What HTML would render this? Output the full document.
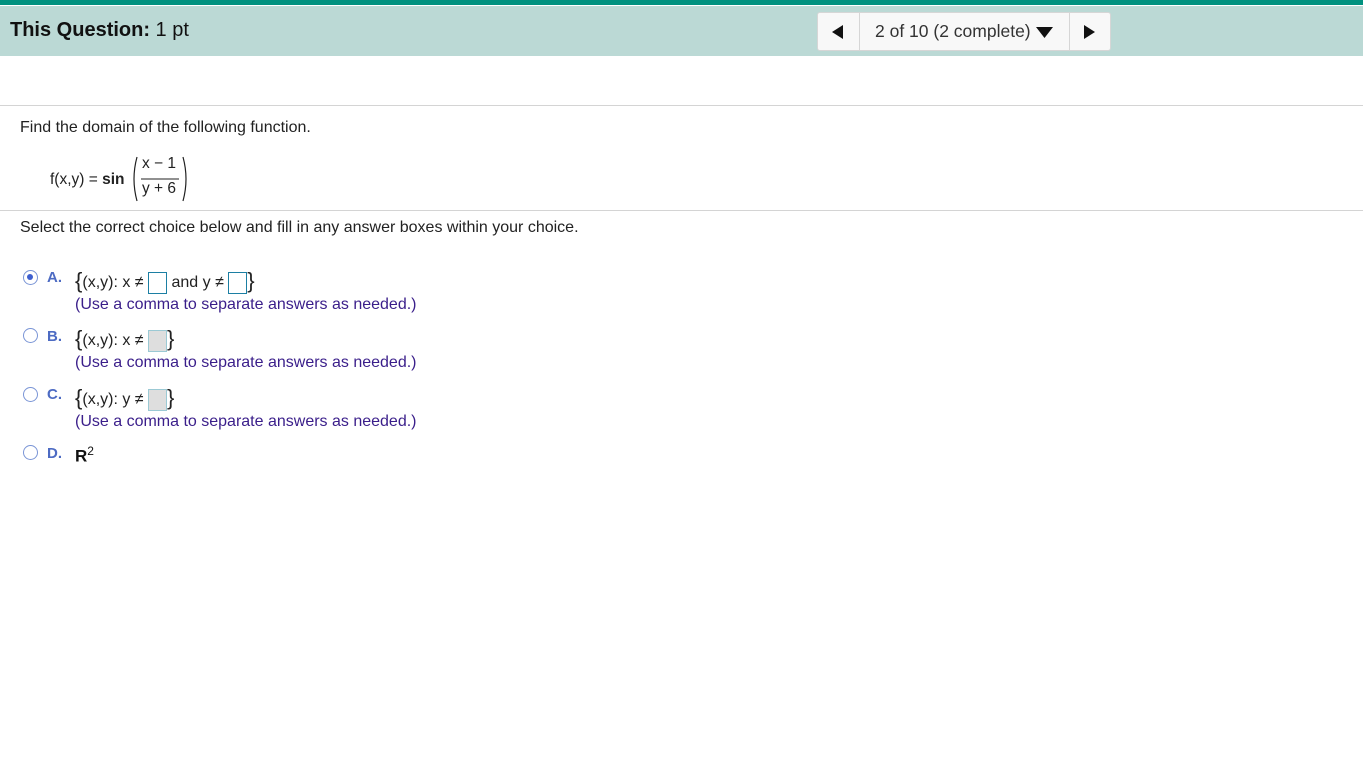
<!DOCTYPE html>
<html><head><style>
body{margin:0;width:1363px;height:767px;overflow:hidden;background:#fff;font-family:"Liberation Sans",Arial,sans-serif;color:#222;position:relative}
.top{position:absolute;left:0;top:0;width:1363px;height:5px;background:#00917f}
.hdr{position:absolute;left:0;top:6px;width:1363px;height:50px;background:#bbd9d5}
.hdr .t{position:absolute;left:10px;top:13px;font-size:20px;color:#111}
.nav{position:absolute;left:817px;top:12px;width:292px;height:37px;background:#f8f8f8;border:1px solid #d6d6d6;border-radius:3px}
.nav .d{position:absolute;top:0;width:1px;height:37px;background:#d6d6d6}
.hr{position:absolute;left:0;width:1363px;height:1px;background:#d4d4d4}
.txt{position:absolute;font-size:16px;white-space:nowrap}
.u{color:#3a1e8a}
.lbl{position:absolute;font-size:15px;font-weight:bold;color:#4d6bc3}
.rad{position:absolute;width:15px;height:15px;border:1.5px solid #7a95d6;border-radius:50%;box-sizing:border-box;background:#fff}
.box{display:inline-block;width:19px;height:22px;box-sizing:border-box;border:1.5px solid #1c7fa3;vertical-align:middle;background:#fff}
.box.g{background:#dedede;border-color:#9bc9d4}
.br{font-size:22px;vertical-align:middle;position:relative;top:-2px}
</style></head><body>
<div class="top"></div>
<div class="hdr"><div class="t"><b>This Question:</b> 1 pt</div></div>
<div class="nav">
 <div class="d" style="left:41px"></div><div class="d" style="left:251px"></div>
 <svg style="position:absolute;left:14px;top:12px" width="12" height="14"><path d="M11 0V14L0 7Z" fill="#111"/></svg>
 <div style="position:absolute;left:57px;top:8px;font-size:17.5px;color:#333">2 of 10 (2 complete)</div>
 <svg style="position:absolute;left:218px;top:14px" width="17" height="11"><path d="M0 0H17L8.5 11Z" fill="#111"/></svg>
 <svg style="position:absolute;left:266px;top:12px" width="12" height="14"><path d="M0 0V14L11 7Z" fill="#111"/></svg>
</div>
<div class="hr" style="top:105px"></div>
<div class="txt" style="left:20px;top:119px">Find the domain of the following function.</div>
<div class="txt" style="left:50px;top:171px;font-size:15.5px">f(x,y) = <b>sin</b></div>
<svg style="position:absolute;left:130px;top:155px" width="60" height="48"><path d="M7 2Q1 24 7 46" fill="none" stroke="#222" stroke-width="1.2"/><path d="M53 2Q59 24 53 46" fill="none" stroke="#222" stroke-width="1.2"/><line x1="11" y1="24" x2="49" y2="24" stroke="#222"/></svg>
<div class="txt" style="left:142px;top:155px;font-size:15.5px">x − 1</div>
<div class="txt" style="left:142px;top:180px;font-size:15.5px">y + 6</div>
<div class="hr" style="top:210px"></div>
<div class="txt" style="left:20px;top:219px">Select the correct choice below and fill in any answer boxes within your choice.</div>

<div class="rad" style="left:23px;top:270px"><div style="position:absolute;left:3px;top:3px;width:6px;height:6px;border-radius:50%;background:#3e5fcf"></div></div>
<div class="lbl" style="left:47px;top:269px">A.</div>
<div class="txt" style="left:75px;top:270px"><span class="br">{</span>(x,y): x ≠ <span class="box"></span> and y ≠ <span class="box"></span><span class="br">}</span></div>
<div class="txt u" style="left:75px;top:296px">(Use a comma to separate answers as needed.)</div>

<div class="rad" style="left:23px;top:328px"></div>
<div class="lbl" style="left:47px;top:328px">B.</div>
<div class="txt" style="left:75px;top:328px"><span class="br">{</span>(x,y): x ≠ <span class="box g"></span><span class="br">}</span></div>
<div class="txt u" style="left:75px;top:354px">(Use a comma to separate answers as needed.)</div>

<div class="rad" style="left:23px;top:387px"></div>
<div class="lbl" style="left:47px;top:386px">C.</div>
<div class="txt" style="left:75px;top:387px"><span class="br">{</span>(x,y): y ≠ <span class="box g"></span><span class="br">}</span></div>
<div class="txt u" style="left:75px;top:413px">(Use a comma to separate answers as needed.)</div>

<div class="rad" style="left:23px;top:445px"></div>
<div class="lbl" style="left:47px;top:445px">D.</div>
<div class="txt" style="left:75px;top:444px;color:#111"><b style="font-size:17px">R</b><sup style="font-size:12px">2</sup></div>
</body></html>
